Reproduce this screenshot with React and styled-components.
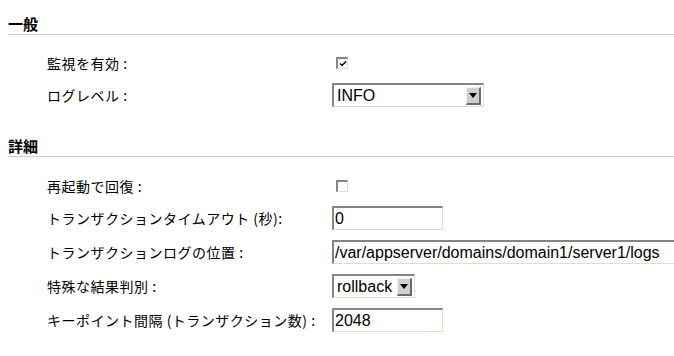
import React from 'react';
import styled, { createGlobalStyle } from 'styled-components';

const GlobalStyle = createGlobalStyle`
  html, body {
    margin: 0;
    padding: 0;
    background: #fff;
  }
  body {
    font-family: "Noto Sans CJK JP", "Liberation Sans", sans-serif;
    color: #000;
  }
`;

const Page = styled.div`
  width: 674px;
  height: 356px;
  padding-top: 16px;
  box-sizing: border-box;
  overflow: hidden;
`;

const SectionTitle = styled.div`
  margin: ${ props => props.first ? '0' : '27px' } 0 0 8px;
  padding-bottom: 2px;
  font-size: 15px;
  font-weight: bold;
  line-height: 16px;
  border-bottom: 1px solid #cdd1bd;
`;

const Rows = styled.div`
  padding-top: ${ props => props.top }px;
`;

const Row = styled.div`
  display: grid;
  grid-template-columns: 285px 1fr;
  align-items: center;
  height: ${ props => props.h }px;
  padding-left: 47px;
`;

const Label = styled.div`
  font-size: 14px;
  letter-spacing: 0.5px;
  line-height: 16px;
  white-space: nowrap;
`;

const Control = styled.div`
  display: flex;
  align-items: center;
  min-width: 0;
`;

const Check = styled.div`
  width: 12px;
  height: 12px;
  margin-left: 4px;
  box-sizing: border-box;
  background: #fff;
  border-top: 2px solid #858585;
  border-left: 2px solid #858585;
  border-right: 1px solid #e2dfc8;
  border-bottom: 1px solid #e2dfc8;
  display: flex;
  align-items: center;
  justify-content: center;
`;

const Field = styled.div`
  width: ${ props => props.w }px;
  flex: none;
  height: 24px;
  box-sizing: border-box;
  border-top: 2px solid #858585;
  border-left: 2px solid #858585;
  border-right: 1px solid #e2dfc8;
  border-bottom: 1px solid #e2dfc8;
  background: #fff;
  font-family: "Liberation Sans", Arial, sans-serif;
  font-size: 16px;
  line-height: 21px;
  padding-left: 1px;
  white-space: nowrap;
  overflow: hidden;
`;

const Select = styled(Field)`
  display: flex;
  align-items: center;
  justify-content: space-between;
  padding: 0 2px 0 3px;
`;

const ArrowButton = styled.div`
  width: 15px;
  height: 18px;
  box-sizing: border-box;
  background: #cfcfcf;
  border-top: 1px solid #f2f2f2;
  border-left: 1px solid #f2f2f2;
  border-right: 2px solid #6a6a6a;
  border-bottom: 2px solid #6a6a6a;
  display: flex;
  align-items: center;
  justify-content: center;
`;

const Triangle = styled.div`
  width: 0;
  height: 0;
  border-left: 4px solid transparent;
  border-right: 4px solid transparent;
  border-top: 5px solid #000;
`;

function Checkbox({ checked }) {
  return (
    <Check>
      { checked &&
        <svg width='8' height='7' viewBox='0 0 8 7'>
          <polyline points='1,3.5 3,5.5 7,1.5' fill='none' stroke='#000' strokeWidth='1.5' />
        </svg>
      }
    </Check>
  );
}

function Dropdown({ value, w }) {
  return (
    <Select w={ w }>
      <span>{ value }</span>
      <ArrowButton><Triangle /></ArrowButton>
    </Select>
  );
}

export default function App() {
  return (
    <Page>
      <GlobalStyle />
      <SectionTitle first>一般</SectionTitle>
      <Rows top={ 12 }>
        <Row h={ 32 }>
          <Label>監視を有効 :</Label>
          <Control><Checkbox checked /></Control>
        </Row>
        <Row h={ 32 }>
          <Label>ログレベル :</Label>
          <Control><Dropdown value='INFO' w={ 152 } /></Control>
        </Row>
      </Rows>

      <SectionTitle>詳細</SectionTitle>
      <Rows top={ 14 }>
        <Row h={ 30 }>
          <Label>再起動で回復 :</Label>
          <Control><Checkbox /></Control>
        </Row>
        <Row h={ 34 }>
          <Label>トランザクションタイムアウト (秒):</Label>
          <Control><Field w={ 111 }>0</Field></Control>
        </Row>
        <Row h={ 34 }>
          <Label>トランザクションログの位置 :</Label>
          <Control><Field w={ 350 }>/var/appserver/domains/domain1/server1/logs</Field></Control>
        </Row>
        <Row h={ 34 }>
          <Label>特殊な結果判別 :</Label>
          <Control><Dropdown value='rollback' w={ 83 } /></Control>
        </Row>
        <Row h={ 34 }>
          <Label>キーポイント間隔 (トランザクション数) :</Label>
          <Control><Field w={ 111 }>2048</Field></Control>
        </Row>
      </Rows>
    </Page>
  );
}
